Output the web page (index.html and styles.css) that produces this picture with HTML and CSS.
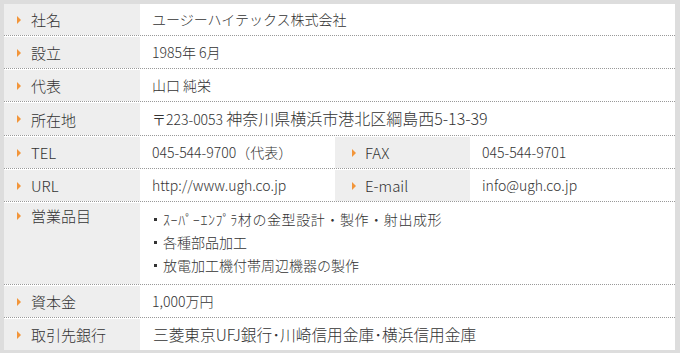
FILE: index.html
```html
<!DOCTYPE html>
<html lang="ja">
<head>
  <meta charset="UTF-8" />
  <meta name="viewport" content="width=device-width, initial-scale=1.0"/>
  <title>会社概要 - ユージーハイテックス株式会社</title>
  <link rel="stylesheet" href="styles.css">
</head>
<body>
  <div class="company">
    <div class="row">
      <div class="label">社名</div>
      <div class="value">ユージーハイテックス株式会社</div>
    </div>
    <div class="row">
      <div class="label">設立</div>
      <div class="value">1985年 6月</div>
    </div>
    <div class="row">
      <div class="label">代表</div>
      <div class="value">山口 純栄</div>
    </div>
    <div class="row">
      <div class="label">所在地</div>
      <div class="value">〒223-0053 <span class="big">神奈川県横浜市港北区綱島西5-13-39</span></div>
    </div>
    <div class="row split">
      <div class="label">TEL</div>
      <div class="value">045-544-9700（代表）</div>
      <div class="label">FAX</div>
      <div class="value">045-544-9701</div>
    </div>
    <div class="row split">
      <div class="label">URL</div>
      <div class="value">http://www.ugh.co.jp</div>
      <div class="label">E-mail</div>
      <div class="value">info@ugh.co.jp</div>
    </div>
    <div class="row">
      <div class="label top">営業品目</div>
      <div class="value">
        <ul class="items">
          <li class="wide">ｽｰﾊﾟｰｴﾝﾌﾟﾗ材の金型設計・製作・射出成形</li>
          <li>各種部品加工</li>
          <li>放電加工機付帯周辺機器の製作</li>
        </ul>
      </div>
    </div>
    <div class="row">
      <div class="label">資本金</div>
      <div class="value">1,000万円</div>
    </div>
    <div class="row">
      <div class="label">取引先銀行</div>
      <div class="value bank">三菱東京UFJ銀行･川崎信用金庫･横浜信用金庫</div>
    </div>
  </div>
</body>
</html>
```

FILE: styles.css
```css
body {
  margin: 0;
  background-color: #ddd;
  color: #333;
  font-family: "Noto Sans CJK JP", sans-serif;
  font-weight: 300;
}
.company {
  margin: 4px 5px 4px 4px;
  background-color: #fff;
}
.row {
  display: grid;
  grid-template-columns: 136px 1fr;
  border-bottom: 1px dotted #999;
}
.row + .row {
  margin-top: 1px;
}
.row:last-child {
  border-bottom: none;
}
.row.split {
  grid-template-columns: 136px 195px 135px 1fr;
}
.label {
  display: flex;
  align-items: center;
  gap: 10px;
  padding-left: 13px;
  background-color: #eee;
  font-size: 15px;
  line-height: 31px;
}
.split .label + .value + .label {
  padding-left: 17px;
  gap: 9px;
}
.label::before {
  content: "";
  border-left: 4px solid #f2953a;
  border-top: 4px solid transparent;
  border-bottom: 4px solid transparent;
}
.label.top {
  align-items: flex-start;
  line-height: 26px;
}
.label.top::before {
  margin-top: 9px;
}
.value {
  padding-left: 12px;
  font-size: 14px;
  line-height: 31px;
}
.big {
  font-size: 16px;
}
.bank {
  padding-left: 13px;
  font-size: 15.7px;
}
.items {
  list-style: none;
  margin: 0;
  padding: 5px 0 7px 2px;
}
.items li {
  display: flex;
  align-items: center;
  line-height: 23px;
}
.items li::before {
  content: "";
  width: 3px;
  height: 3px;
  margin-right: 6px;
  background-color: #333;
}
.items .wide {
  letter-spacing: 0.6px;
}
```
